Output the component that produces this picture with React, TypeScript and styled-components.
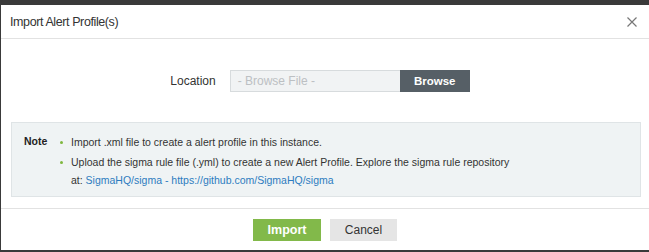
import { createGlobalStyle } from 'styled-components'
import styled from 'styled-components'

const GlobalStyle = createGlobalStyle`
  html, body {
    margin: 0;
    padding: 0;
    background: #3a3a3a;
    overflow: hidden;
  }
  body {
    font-family: "Liberation Sans", Arial, sans-serif;
    color: #333;
  }
`

const Backdrop = styled.div`
  box-sizing: border-box;
  width: 649px;
  height: 252px;
  padding: 5px 0 2px 1px;
`

const Dialog = styled.section`
  background: #fff;
  height: 245px;
  display: flex;
  flex-direction: column;
`

const Header = styled.header`
  height: 33px;
  border-bottom: 1px solid #e2e2e2;
  display: flex;
  align-items: center;
  justify-content: space-between;
  padding: 0 11px 0 9px;
`

const Title = styled.h1`
  margin: 0;
  font-size: 12.5px;
  letter-spacing: -0.4px;
  font-weight: normal;
  color: #333;
`

const CloseButton = styled.button`
  border: 0;
  background: none;
  padding: 0;
  width: 12px;
  height: 12px;
  display: flex;
  align-items: center;
  justify-content: center;
  cursor: pointer;
`

const Body = styled.div`
  flex: 1;
  padding: 31px 8px 0 10px;
  display: flex;
  flex-direction: column;
`

const FieldRow = styled.div`
  display: flex;
  align-items: center;
  justify-content: center;
  gap: 14px;
  padding-right: 12px;
`

const Label = styled.label`
  font-size: 12px;
  color: #333;
`

const FileField = styled.div`
  display: flex;
  height: 22px;
`

const FileInput = styled.div`
  box-sizing: border-box;
  width: 170px;
  height: 22px;
  background: #f1f3f4;
  border: 1px solid #d7dbdd;
  border-right: 0;
  color: #bcc0c3;
  font-size: 12px;
  line-height: 20px;
  padding-left: 7px;
`

const BrowseButton = styled.button`
  width: 70px;
  height: 22px;
  border: 0;
  background: #565f66;
  color: #fff;
  font-family: inherit;
  font-size: 11.5px;
  font-weight: bold;
  padding: 0;
`

const NoteBox = styled.div`
  margin-top: 30px;
  box-sizing: border-box;
  height: 75px;
  background: #eff3f4;
  border: 1px solid #dfe4e6;
  padding: 10px 12px 0;
  display: flex;
`

const NoteLabel = styled.div`
  font-size: 10.5px;
  font-weight: bold;
  line-height: 16px;
  color: #222;
  width: 36px;
`

const NoteList = styled.ul`
  margin: 0;
  padding: 0;
  list-style: none;
  width: 450px;
`

const NoteItem = styled.li`
  position: relative;
  padding-left: 11px;
  font-size: 10.5px;
  line-height: 18px;
  margin-bottom: 2px;
  &::before {
    content: '';
    position: absolute;
    left: 0;
    top: 8px;
    width: 3px;
    height: 3px;
    border-radius: 50%;
    background: #7fb83f;
  }
`

const Link = styled.a`
  color: #2d7cbf;
  text-decoration: none;
`

const Footer = styled.footer`
  margin-top: 11px;
  border-top: 1px solid #e2e2e2;
  padding: 10px 0 9px;
  display: flex;
  justify-content: center;
  gap: 9px;
`

const ActionButton = styled.button<{ $primary?: boolean }>`
  height: 22px;
  width: ${(p) => (p.$primary ? '68px' : '67px')};
  border: 0;
  padding: 0;
  font-family: inherit;
  font-size: ${(p) => (p.$primary ? '12.5px' : '12px')};
  font-weight: ${(p) => (p.$primary ? 'bold' : 'normal')};
  background: ${(p) => (p.$primary ? '#82b94a' : '#e5e5e5')};
  color: ${(p) => (p.$primary ? '#fff' : '#333')};
`

function App() {
  return (
    <Backdrop>
      <GlobalStyle />
      <Dialog>
        <Header>
          <Title>Import Alert Profile(s)</Title>
          <CloseButton aria-label="Close">
            <svg width="10" height="10" viewBox="0 0 10 10">
              <path d="M0.5 0.5 L9.5 9.5 M9.5 0.5 L0.5 9.5" stroke="#777" strokeWidth="1.2" />
            </svg>
          </CloseButton>
        </Header>
        <Body>
          <FieldRow>
            <Label>Location</Label>
            <FileField>
              <FileInput>- Browse File -</FileInput>
              <BrowseButton>Browse</BrowseButton>
            </FileField>
          </FieldRow>
          <NoteBox>
            <NoteLabel>Note</NoteLabel>
            <NoteList>
              <NoteItem>Import .xml file to create a alert profile in this instance.</NoteItem>
              <NoteItem>
                Upload the sigma rule file (.yml) to create a new Alert Profile. Explore the sigma rule repository
                at: <Link href="#">SigmaHQ/sigma - https://github.com/SigmaHQ/sigma</Link>
              </NoteItem>
            </NoteList>
          </NoteBox>
        </Body>
        <Footer>
          <ActionButton $primary>Import</ActionButton>
          <ActionButton>Cancel</ActionButton>
        </Footer>
      </Dialog>
    </Backdrop>
  )
}

export default App
